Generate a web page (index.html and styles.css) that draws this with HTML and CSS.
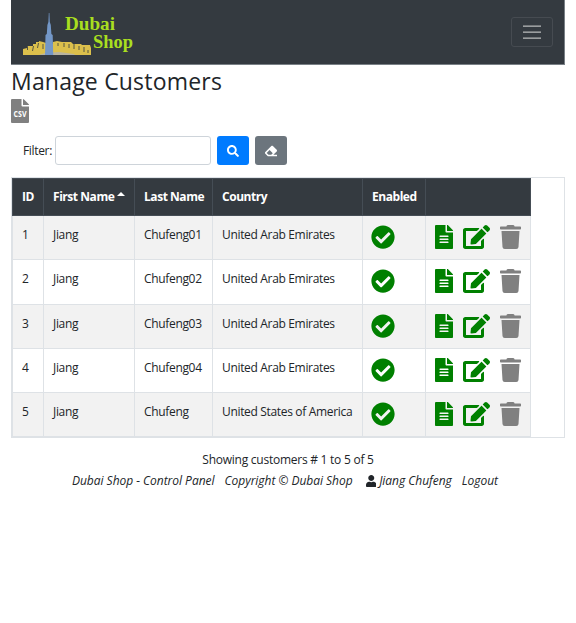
FILE: index.html
```html
<!DOCTYPE html>
<html lang="en">
<head>
<meta charset="utf-8">
<title>Manage Customers</title>
<link rel="stylesheet" href="styles.css">
</head>
<body>
<svg class="defs" aria-hidden="true">
  <symbol id="check" viewBox="0 0 512 512"><path d="M504 256c0 136.967-111.033 248-248 248S8 392.967 8 256 119.033 8 256 8s248 111.033 248 248zM227.314 387.314l184-184c6.248-6.248 6.248-16.379 0-22.627l-22.627-22.627c-6.248-6.249-16.379-6.249-22.628 0L216 308.118l-70.059-70.059c-6.248-6.248-16.379-6.248-22.628 0l-22.627 22.627c-6.248 6.248-6.248 16.379 0 22.627l104 104c6.249 6.249 16.379 6.249 22.628.001z"/></symbol>
  <symbol id="file" viewBox="0 0 384 512"><path d="M224 136V0H24C10.7 0 0 10.7 0 24v464c0 13.3 10.7 24 24 24h336c13.3 0 24-10.7 24-24V160H248c-13.2 0-24-10.8-24-24zm64 236c0 6.600-5.400 12-12 12H108c-6.600 0-12-5.400-12-12v-8c0-6.600 5.400-12 12-12h168c6.600 0 12 5.400 12 12v8zm0-64c0 6.600-5.400 12-12 12H108c-6.600 0-12-5.400-12-12v-8c0-6.600 5.400-12 12-12h168c6.600 0 12 5.400 12 12v8zm0-72v8c0 6.600-5.400 12-12 12H108c-6.600 0-12-5.400-12-12v-8c0-6.600 5.400-12 12-12h168c6.600 0 12 5.400 12 12zm96-114.100v6.100H256V0h6.100c6.400 0 12.500 2.500 17 7l97.900 98c4.500 4.500 7 10.600 7 16.900z"/></symbol>
  <symbol id="edit" viewBox="0 0 576 512"><path d="M402.600 83.200l90.200 90.200c3.800 3.800 3.800 10 0 13.800L274.400 405.600l-92.800 10.300c-12.400 1.400-22.900-9.100-21.500-21.500l10.300-92.800L388.800 83.200c3.800-3.800 10-3.800 13.800 0zm162-22.900l-48.800-48.800c-15.200-15.200-39.900-15.200-55.200 0l-35.400 35.400c-3.800 3.800-3.800 10 0 13.800l90.200 90.200c3.800 3.800 10 3.800 13.800 0l35.400-35.400c15.200-15.300 15.200-40 0-55.200zM384 346.200V448H64V128h229.800c3.200 0 6.200-1.300 8.500-3.500l40-40c7.600-7.600 2.200-20.500-8.500-20.500H48C21.500 64 0 85.500 0 112v352c0 26.500 21.500 48 48 48h352c26.500 0 48-21.500 48-48V306.200c0-10.700-12.900-16-20.500-8.500l-40 40c-2.200 2.300-3.500 5.300-3.500 8.500z"/></symbol>
  <symbol id="trash" viewBox="0 0 448 512"><path d="M432 32H312l-9.400-18.700A24 24 0 0 0 281.100 0H166.800a23.720 23.720 0 0 0-21.400 13.300L136 32H16A16 16 0 0 0 0 48v32a16 16 0 0 0 16 16h416a16 16 0 0 0 16-16V48a16 16 0 0 0-16-16zM53.200 467a48 48 0 0 0 47.900 45h245.800a48 48 0 0 0 47.900-45L416 128H32z"/></symbol>
</svg>
<div class="container">
  <nav class="navbar">
    <svg class="logo" width="122" height="50" viewBox="0 0 122 50">
      <path class="gold" d="M0 47V41l4-1 1-2h5v-2h3v-2h3v-1l4 1 3 1 7 1V34l4-1 5 1 9 0 2 2h8l1 1h8l1 3v7z"/>
      <path class="gap" d="M4.500 42v-3M9.500 43l1-5M14.500 40l1-5M20 41v-5M35 38v-3M41 39v-4M46 40v-4M51 41v-5M56 42v-4M61 44v-5M65 45v-3"/>
      <path class="road" d="M16 47l6-2 14-1 15 2 1 1z"/>
      <path class="tower" d="M22 47l.5-20 1.300-1 .6-9 1-3 .4-9h.6l.4 9 1 3 .6 9 1.300 1 .5 20z"/>
      <text x="42" y="22" textLength="50" lengthAdjust="spacingAndGlyphs">Dubai</text>
      <text x="70" y="40" textLength="40" lengthAdjust="spacingAndGlyphs">Shop</text>
    </svg>
    <button class="toggler" aria-label="Menu"><span class="bars"></span></button>
  </nav>
  <h2>Manage Customers</h2>
  <svg class="csv" width="18" height="24" viewBox="0 0 18 24"><path d="M1 0h9.500v6.400q0 1.100 1.100 1.100H18V23q0 1-1 1H1q-1 0-1-1V1q0-1 1-1zM12 0q.6 0 1 .4L17.600 5q.4.400.4 1H12z"/><text x="2.500" y="17.500" textLength="13" lengthAdjust="spacingAndGlyphs">CSV</text></svg>
  <form class="filter">
    <label for="q">Filter:</label><input id="q" type="text">
    <button type="button" class="btn blue" aria-label="Search"><svg width="12" height="12" viewBox="0 0 512 512"><path d="M505 442.700L405.300 343c-4.500-4.500-10.600-7-17-7H372c27.600-35.300 44-79.700 44-128C416 93.100 322.900 0 208 0S0 93.100 0 208s93.100 208 208 208c48.300 0 92.700-16.400 128-44v16.300c0 6.400 2.500 12.500 7 17l99.700 99.700c9.400 9.400 24.600 9.400 33.900 0l28.300-28.300c9.400-9.400 9.400-24.600.1-34zM208 336c-70.700 0-128-57.200-128-128 0-70.700 57.200-128 128-128 70.700 0 128 57.200 128 128 0 70.700-57.200 128-128 128z"/></svg></button>
    <button type="button" class="btn gray" aria-label="Clear"><svg width="12" height="12" viewBox="0 0 512 512"><path d="M497.941 273.941c18.745-18.745 18.745-49.137 0-67.882l-160-160c-18.745-18.745-49.136-18.746-67.883 0l-256 256c-18.745 18.745-18.745 49.137 0 67.882l96 96A48.004 48.004 0 0 0 144 480h356c6.627 0 12-5.373 12-12v-40c0-6.627-5.373-12-12-12H355.883l142.058-142.059zm-302.627-62.627l137.373 137.373L265.373 416H150.628l-80-80 124.686-124.686z"/></svg></button>
  </form>
  <div class="table-box">
    <table>
      <colgroup><col class="c1"><col class="c2"><col class="c3"><col class="c4"><col class="c5"><col class="c6"></colgroup>
      <thead><tr><th>ID</th><th>First Name<i class="caret"></i></th><th>Last Name</th><th>Country</th><th>Enabled</th><th></th></tr></thead>
      <tbody id="rows"></tbody>
    </table>
  </div>
  <p class="count">Showing customers # 1 to 5 of 5</p>
  <footer><span>Dubai Shop - Control Panel</span><span>Copyright © Dubai Shop</span><span class="user"><svg width="10.500" height="12" viewBox="0 0 448 512"><path d="M224 256c70.700 0 128-57.300 128-128S294.700 0 224 0 96 57.300 96 128s57.300 128 128 128zm89.600 32h-16.700c-22.200 10.200-46.900 16-72.900 16s-50.600-5.800-72.900-16h-16.700C60.200 288 0 348.200 0 422.400V464c0 26.500 21.500 48 48 48h352c26.500 0 48-21.500 48-48v-41.600c0-74.200-60.200-134.400-134.400-134.400z"/></svg>Jiang Chufeng</span><span>Logout</span></footer>
</div>
<script src="app.js"></script>
</body>
</html>
```
FILE: styles.css
```css
* { box-sizing: border-box; }
body { margin: 0; background: #fff; color: #212529; font: 12px/18px "Open Sans", "Noto Sans", sans-serif; letter-spacing: -0.33px; }
.defs { position: absolute; width: 0; height: 0; }
.container { padding: 0 11px; }
.navbar { height: 65px; background: #343a40; border: solid #798086; border-width: 0 1px 1px 0; display: flex; align-items: center; justify-content: space-between; padding: 0 11px 0 12px; }
.logo { display: block; margin-top: 1px; }
.logo text { font: bold 18px "Liberation Serif", serif; fill: #a9df1f; letter-spacing: 0; }
.gold { fill: #dcc04c; }
.gap { stroke: #343a40; stroke-width: .8; fill: none; }
.road { fill: #b9b4a0; }
.tower { fill: #7397c8; }
.toggler { width: 42px; height: 30px; padding: 0; border: 1px solid #464b51; border-radius: 3px; background: none; display: grid; place-items: center; }
.bars { width: 18px; height: 14px; background: repeating-linear-gradient(#74787b 0 1px, #9a9d9f 1px 2px, transparent 2px 6px); }
h2 { margin: 2px 0 0; height: 32px; font-size: 23px; line-height: 29px; font-weight: 500; letter-spacing: 0.2px; }
.csv { display: block; fill: #808080; }
.csv text { font: bold 8px "Open Sans", sans-serif; fill: #fff; letter-spacing: 0; }
.filter { display: flex; align-items: center; margin: 13px 0 0 12px; height: 29px; }
.filter label { width: 32px; }
.filter input { width: 156px; height: 29px; border: 1px solid #ced4da; border-radius: 3px; padding: 0 8px; }
.btn { width: 32px; height: 29px; border: 0; border-radius: 3px; padding: 0; display: grid; place-items: center; margin-left: 6px; fill: #fff; }
.blue { background: #007bff; }
.gray { background: #6c757d; }
.table-box { margin-top: 12px; height: 261px; border: 1px solid #dee2e6; }
table { border-collapse: collapse; table-layout: fixed; width: 518px; }
.c1 { width: 31px; } .c2 { width: 91px; } .c3 { width: 78px; } .c4 { width: 150px; } .c5 { width: 63px; } .c6 { width: 105px; }
th, td { border: 1px solid #dee2e6; text-align: left; vertical-align: top; padding: 9px 0 0 9px; white-space: nowrap; }
th { background: #343a40; color: #fff; border-color: #454d55; height: 37px; font-weight: 700; letter-spacing: -0.45px; }
td { height: 44.250px; padding-top: 10px; }
tbody tr:nth-child(odd) { background: #f2f2f2; }
td svg { display: block; margin-top: -1px; }
.caret { display: inline-block; border: 4px solid transparent; border-top: 0; border-bottom-color: #fff; margin-left: 3px; vertical-align: 5px; }
td > svg { margin-left: -1px; }
.ok { fill: #008000; }
.actions { display: flex; gap: 10px; }
.del { fill: #808080; }
.count { margin: 13px 0 3px; text-align: center; letter-spacing: -0.25px; }
footer { display: flex; padding-left: 61px; font-style: italic; gap: 10px; white-space: nowrap; letter-spacing: -0.03px; }
.user { display: flex; align-items: center; gap: 3px; margin-left: 3px; }
.user svg { fill: #212529; }
```
FILE: app.js
```js
const people = [
  ["Jiang", "Chufeng01", "United Arab Emirates"],
  ["Jiang", "Chufeng02", "United Arab Emirates"],
  ["Jiang", "Chufeng03", "United Arab Emirates"],
  ["Jiang", "Chufeng04", "United Arab Emirates"],
  ["Jiang", "Chufeng", "United States of America"]
];
const icon = (id, w, cls) => `<svg class="${cls}" width="${w}" height="24"><use href="#${id}"/></svg>`;
document.getElementById("rows").innerHTML = people.map((p, i) =>
  `<tr><td>${i + 1}</td>${p.map(v => `<td>${v}</td>`).join("")}<td>${icon("check", 24, "ok")}</td>` +
  `<td><div class="actions">${icon("file", 18, "ok")}${icon("edit", 27, "ok")}${icon("trash", 21, "del")}</div></td></tr>`
).join("");
```
